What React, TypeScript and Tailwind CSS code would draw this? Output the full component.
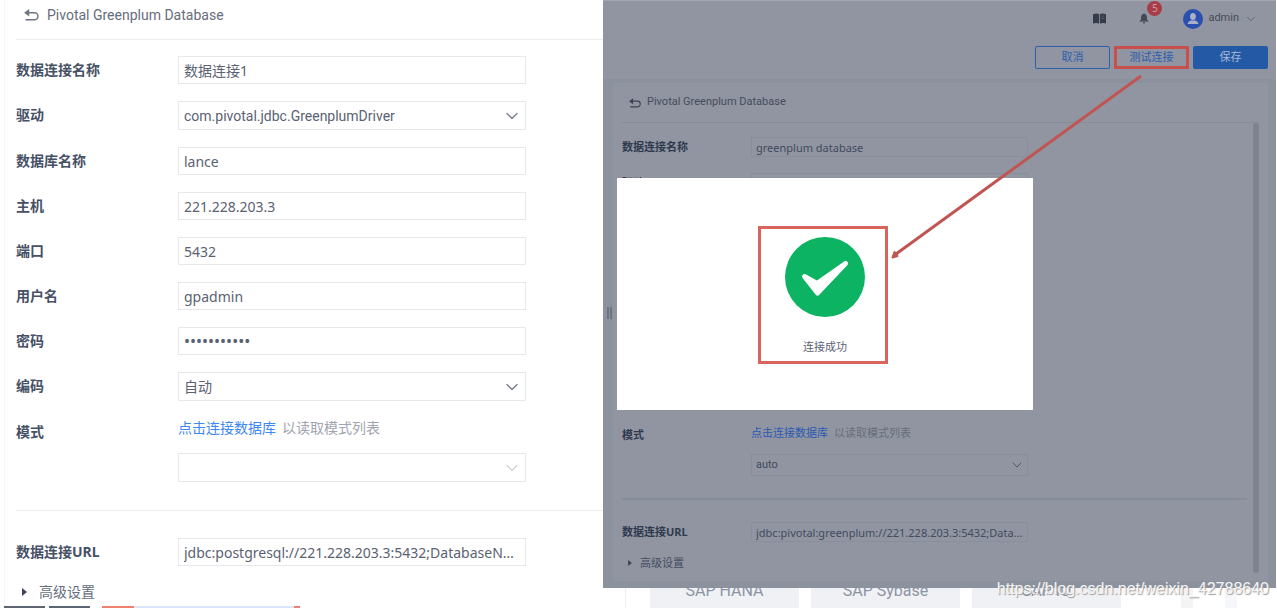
import type { ReactNode } from 'react';
import { clsx } from 'clsx';
import { ChevronDown } from 'lucide-react';

type Size = 'md' | 'sm';

function BackIcon({ className }: { className?: string }) {
  return (
    <svg viewBox="0 0 16 13" fill="none" className={className} aria-hidden="true">
      <path d="M3 4h8.200a3.800 3.800 0 0 1 0 7.700H1.500" stroke="currentColor" strokeWidth="1.500" />
      <path d="M0 4 5.500 0v8z" fill="currentColor" />
    </svg>
  );
}

function BookIcon() {
  return (
    <svg viewBox="0 0 13 11" className="h-[11px] w-[13px]" aria-hidden="true">
      <path d="M0 1.2Q3.4-.3 6.1 1v9.6Q3.4 9.4 0 10.4zM6.9 1Q9.6-.3 13 1.2v9.2q-3.4-1-6.1.2z" fill="#363b49" />
      <path d="M8.4 3.2h3M8.4 5.4h3" stroke="#6c7180" strokeWidth=".6" />
    </svg>
  );
}

function BellIcon() {
  return (
    <svg viewBox="0 0 10 11" className="h-[11px] w-[10px]" aria-hidden="true">
      <path d="M5 .4C3 .8 2 2.400 2 4.400v2L.3 8.600h9.400L8 6.400v-2C8 2.400 7 .8 5 .4zM3.600 9.300h2.800q-.3 1.300-1.400 1.300T3.600 9.300z" fill="#444957" />
    </svg>
  );
}

function AvatarIcon() {
  return (
    <svg viewBox="0 0 20 20" className="size-5" aria-hidden="true">
      <circle cx="10" cy="10" r="10" fill="#2a4fae" />
      <ellipse cx="10" cy="7.600" rx="2.900" ry="3.500" fill="#a9b1c9" />
      <path d="M4.600 15q0-2.600 3.600-3.600h3.600q3.600 1 3.600 3.600z" fill="#a9b1c9" />
    </svg>
  );
}

function Row({ label, htmlFor, size = 'md', children }: { label: string; htmlFor: string; size?: Size; children: ReactNode }) {
  return (
    <div className="flex items-start">
      <label
        htmlFor={htmlFor}
        className={clsx(
          'shrink-0 font-bold',
          size === 'md' ? 'w-[162px] text-sm leading-7 text-[#465066]' : 'w-[129px] text-[11px] leading-5 text-[#2f3a4f]',
        )}
      >
        {label}
      </label>
      <div className={size === 'md' ? 'w-[348px]' : 'w-[277px]'}>{children}</div>
    </div>
  );
}

function TextField({ id, value, size = 'md', type = 'text' }: { id: string; value: string; size?: Size; type?: string }) {
  return (
    <input
      id={id}
      type={type}
      defaultValue={value}
      className={clsx(
        'block w-full border bg-transparent outline-none text-ellipsis',
        size === 'md' ? 'h-7 border-[#e6e8ec] px-[5px] text-[#5a6272]' : 'h-5 border-[#888e9b] px-1 text-[11px] text-[#414b60]',
        size === 'md' && (type === 'password' ? 'text-base' : 'text-sm'),
      )}
    />
  );
}

function SelectField({ id, value, size = 'md', faded }: { id: string; value: string; size?: Size; faded?: boolean }) {
  return (
    <div className="relative">
      <select
        id={id}
        defaultValue={value}
        className={clsx(
          "block w-full appearance-none border bg-transparent font-['Roboto','Noto_Sans_CJK_SC',sans-serif] outline-none",
          size === 'md' ? 'h-[29px] border-[#e6e8ec] px-[5px] text-sm text-[#5a6272]' : 'h-[22px] border-[#888e9b] px-1 text-[11px] text-[#414b60]',
        )}
      >
        <option>{value}</option>
      </select>
      <ChevronDown
        strokeWidth={1.5}
        className={clsx(
          'pointer-events-none absolute top-1/2 -translate-y-1/2',
          size === 'md' ? 'right-1 size-5' : 'right-[3px] size-4',
          size === 'sm' ? 'text-[#4d5568]' : faded ? 'text-[#cfd2d8]' : 'text-[#747b8a]',
        )}
      />
    </div>
  );
}

function SchemaHint({ size = 'md' }: { size?: Size }) {
  return (
    <p className={size === 'md' ? 'text-sm leading-5' : 'text-[11px] leading-4'}>
      <a href="#connect" className={size === 'md' ? 'text-[#3d86f5]' : 'text-[#2a5ab4]'}>点击连接数据库</a>
      <span className={size === 'md' ? 'ml-1.5 text-[#a0a5b0]' : 'ml-1.5 text-[#666d7c]'}>以读取模式列表</span>
    </p>
  );
}

function Advanced({ size = 'md' }: { size?: Size }) {
  return (
    <button
      type="button"
      className={clsx('flex items-center pl-1.5', size === 'md' ? 'gap-3 text-sm leading-5 text-[#666d7c]' : 'gap-2 text-[11px] leading-4 text-[#444d60]')}
    >
      <svg viewBox="0 0 5 8" className={size === 'md' ? 'h-2 w-[5px]' : 'h-1.5 w-1'} aria-hidden="true">
        <path d="M0 0l5 4-5 4z" fill="#3b4354" />
      </svg>
      高级设置
    </button>
  );
}

function ConnectionForm() {
  return (
    <section className="min-w-0 overflow-hidden bg-white pl-1">
      <div className="flex h-full flex-col border-l border-[#f6f7f9] pl-[11px]">
        <header className="flex h-10 items-start gap-2 border-b border-[#ebedf1] pl-2 pt-[5px]">
          <BackIcon className="mt-1 h-3 w-[15px] text-[#6d7482]" />
          <h1 className="font-['Roboto',sans-serif] text-sm leading-5 text-[#666d7b]">Pivotal Greenplum Database</h1>
        </header>

        <form className="flex flex-col gap-[17px] border-b border-[#ebedf1] pb-7 pt-4">
          <Row label="数据连接名称" htmlFor="name"><TextField id="name" value="数据连接1" /></Row>
          <Row label="驱动" htmlFor="driver"><SelectField id="driver" value="com.pivotal.jdbc.GreenplumDriver" /></Row>
          <Row label="数据库名称" htmlFor="database"><TextField id="database" value="lance" /></Row>
          <Row label="主机" htmlFor="host"><TextField id="host" value="221.228.203.3" /></Row>
          <Row label="端口" htmlFor="port"><TextField id="port" value="5432" /></Row>
          <Row label="用户名" htmlFor="user"><TextField id="user" value="gpadmin" /></Row>
          <Row label="密码" htmlFor="password"><TextField id="password" type="password" value="greenplum12" /></Row>
          <Row label="编码" htmlFor="encoding"><SelectField id="encoding" value="自动" /></Row>
          <Row label="模式" htmlFor="schema">
            <div className="flex flex-col gap-[15px]">
              <SchemaHint />
              <SelectField id="schema" value="" faded />
            </div>
          </Row>
        </form>

        <div className="flex flex-col gap-4 pt-[27px]">
          <Row label="数据连接URL" htmlFor="url">
            <TextField id="url" value="jdbc:postgresql://221.228.203.3:5432;DatabaseName=lance" />
          </Row>
          <Advanced />
        </div>

        <div className="-ml-3 mt-auto flex h-0.5 shrink-0">
          <i className="mr-1 w-[41px] bg-[#5d6575]" />
          <i className="mr-3 w-[41px] bg-[#5d6575]" />
          <i className="w-8 bg-[#f0806f]" />
          <i className="w-40 bg-[#dbe4fb]" />
          <i className="w-1.5 bg-[#f0806f]" />
        </div>
      </div>
    </section>
  );
}

function TopBar() {
  return (
    <header className="h-[78px] bg-[#9195a1] pr-2">
      <div className="flex h-[35px] items-center justify-end pr-2.5">
        <BookIcon />
        <div className="relative ml-[33px]">
          <BellIcon />
          <span className="absolute -top-3 left-2 flex size-[15px] items-center justify-center rounded-full bg-[#a63d49] text-[10px] text-[#d29aa2]">5</span>
        </div>
        <button type="button" className="ml-[34px] flex items-center gap-[5px] font-['Roboto',sans-serif] text-[11px] text-[#444b5a]">
          <AvatarIcon />
          admin
          <ChevronDown strokeWidth={1.5} className="size-3.5 text-[#5b6170]" />
        </button>
      </div>
      <div className="flex justify-end gap-1 pt-2.5 text-[11px]">
        <button type="button" className="h-[23px] w-[75px] rounded-[2px] border border-[#2c5fae] text-[#2c5fae]">取消</button>
        <button type="button" className="h-[23px] w-[75px] border-3 border-[#c94f4c] text-[#2c5fae]">测试连接</button>
        <button type="button" className="h-[23px] w-[75px] rounded-[2px] bg-[#2459a6] text-[#a8b8d6]">保存</button>
      </div>
    </header>
  );
}

function ResultDialog() {
  return (
    <div role="dialog" aria-label="连接成功" className="absolute left-3.5 top-[177px] flex h-[232px] w-[416px] items-start justify-center bg-white pr-1 pt-12">
      <div className="flex h-[138px] w-[130px] flex-col items-center border-3 border-[#d9645d] pl-1 pt-2">
        <svg viewBox="0 0 80 80" className="size-20" aria-hidden="true">
          <circle cx="40" cy="40" r="40" fill="#0cb362" />
          <path d="M19.500 39.500 32 46.500 60.500 26.500 32.500 56z" fill="#fff" stroke="#fff" strokeWidth="5" strokeLinejoin="round" />
        </svg>
        <p className="mt-[22px] text-[11px] leading-4 text-[#5a6275]">连接成功</p>
      </div>
    </div>
  );
}

function TestWindow() {
  return (
    <div className="relative flex h-[588px] flex-col border-t border-[#a3a6af] bg-[#8b929e]">
      <TopBar />
      <div className="mb-[7px] ml-2.5 mr-2 mt-1 flex flex-1 flex-col bg-[#9195a1] px-[9px]">
        <div className="flex h-10 items-center gap-1.5 border-b border-[#868d9a] pl-[7px]">
          <BackIcon className="h-2.5 w-3 text-[#3b4355]" />
          <h2 className="font-['Roboto',sans-serif] text-[11px] text-[#444c5d]">Pivotal Greenplum Database</h2>
        </div>
        <div className="flex flex-1 justify-between">
          <div className="flex min-w-0 flex-1 flex-col">
            <div className="flex h-[302px] flex-col gap-4 pt-[14px]">
              <Row size="sm" label="数据连接名称" htmlFor="test-name"><TextField size="sm" id="test-name" value="greenplum database" /></Row>
              <Row size="sm" label="驱动" htmlFor="test-driver"><SelectField size="sm" id="test-driver" value="" /></Row>
            </div>
            <div className="border-b-2 border-[#868d9a] pb-[22px]">
              <Row size="sm" label="模式" htmlFor="test-schema">
                <div className="flex flex-col gap-[13px]">
                  <SchemaHint size="sm" />
                  <SelectField size="sm" id="test-schema" value="auto" />
                </div>
              </Row>
            </div>
            <div className="flex flex-col gap-[13px] pt-[22px]">
              <Row size="sm" label="数据连接URL" htmlFor="test-url">
                <TextField size="sm" id="test-url" value="jdbc:pivotal:greenplum://221.228.203.3:5432;DatabaseName=lance" />
              </Row>
              <Advanced size="sm" />
            </div>
          </div>
          <div className="mb-2 ml-1.5 w-1.5 rounded-full bg-[#7d8390]" />
        </div>
      </div>

      <ResultDialog />

      {/* splitter grip */}
      <div className="absolute left-1 top-[306px] flex h-3 gap-px">
        <i className="w-0.5 bg-[#6d7482]" />
        <i className="w-0.5 bg-[#6d7482]" />
      </div>

      {/* callout arrow from the test button to the result */}
      <svg viewBox="0 0 260 190" className="pointer-events-none absolute left-[285px] top-[69px] h-[190px] w-[260px]" aria-hidden="true">
        <path d="M253 6 8 184" stroke="#c05653" strokeWidth="3" />
        <path d="M4.500 187.500 6.500 182 9.500 186z" fill="#c05653" stroke="#c05653" strokeWidth="2" strokeLinejoin="round" />
      </svg>
    </div>
  );
}

export default function App() {
  return (
    <main className="relative grid min-h-screen grid-cols-[603fr_674fr] overflow-hidden bg-white font-['Noto_Sans','Noto_Sans_CJK_SC',sans-serif]">
      <ConnectionForm />
      <section className="min-w-0 pr-px">
        <TestWindow />
        <div className="ml-[22px] flex h-5 gap-3 overflow-hidden border-l border-[#eceef2] pl-6 font-['Roboto',sans-serif] text-base leading-[6px] text-[#8c94a4]">
          <div className="w-[149px] bg-[#f0f1f4] text-center">SAP HANA</div>
          <div className="w-[149px] bg-[#f0f1f4] text-center">SAP Sybase</div>
          <div className="w-[149px] bg-[#f0f1f4] text-center">SAP IQ</div>
          <div className="ml-12 w-3 bg-[#f4f4f5]" />
          <div className="ml-5 w-3 bg-[#f6f7fa]" />
        </div>
      </section>
      <p className="absolute bottom-[7px] right-2 font-['Liberation_Sans',sans-serif] text-base leading-6 text-[#f4f4f6] [text-shadow:1px_1px_1px_#999]">
        https://blog.csdn.net/weixin_42788640
      </p>
    </main>
  );
}
